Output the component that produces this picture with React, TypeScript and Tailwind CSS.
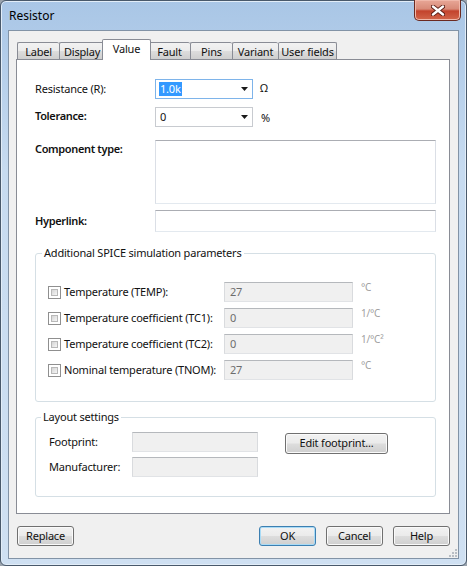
import React from "react";

const tabs = [
  { label: "Label", w: "w-[42px]" },
  { label: "Display", w: "w-[45px]" },
  { label: "Value", w: "w-[45px]", active: true },
  { label: "Fault", w: "w-[41px]" },
  { label: "Pins", w: "w-[42px]" },
  { label: "Variant", w: "w-[46px]" },
  { label: "User fields", w: "w-[59px]" },
];

const spice = [
  { label: "Temperature (TEMP):", value: "27", unit: "°C" },
  { label: "Temperature coefficient (TC1):", value: "0", unit: "1/°C" },
  { label: "Temperature coefficient (TC2):", value: "0", unit: "1/°C²" },
  { label: "Nominal temperature (TNOM):", value: "27", unit: "°C" },
];

function CloseGlyph() {
  return (
    <svg width="14" height="11" viewBox="0 0 14 11">
      <path d="M2 1.5 L12 9.5 M12 1.5 L2 9.5" stroke="#5a1d14" strokeWidth="4.2" strokeLinecap="round" />
      <path d="M2 1.5 L12 9.5 M12 1.5 L2 9.5" stroke="#ffffff" strokeWidth="2.4" strokeLinecap="round" />
    </svg>
  );
}

function DropArrow() {
  return (
    <svg width="7" height="4" viewBox="0 0 7 4">
      <path d="M0 0 H7 L3.5 4 Z" fill="#1a1a1a" />
    </svg>
  );
}

function Combo({ value, focused = false }: { value: string; focused?: boolean }) {
  return (
    <div
      className={
        "flex h-[20px] w-[98px] items-center bg-white pl-[3px] pr-[4px] border " +
        (focused ? "border-[#7eb4ea]" : "border-[#c8cbd0]")
      }
    >
      {focused ? (
        <span className="bg-[#3399ff] px-[1px] leading-[14px] text-white">{value}</span>
      ) : (
        <span className="px-[1px]">{value}</span>
      )}
      <span className="ml-auto">
        <DropArrow />
      </span>
    </div>
  );
}

function TextBox({ className }: { className: string }) {
  return (
    <div
      className={
        "border border-t-[#abadb3] border-x-[#dbdfe6] border-b-[#e3e9ef] bg-white " + className
      }
    />
  );
}

function DisabledBox({ value, className }: { value?: string; className: string }) {
  return (
    <div
      className={
        "flex items-center border border-t-[#b5b8bc] border-x-[#d9dbde] border-b-[#e1e3e6] bg-[#f0f0f0] pl-[5px] text-[#6d6d6d] " +
        className
      }
    >
      {value}
    </div>
  );
}

function Checkbox() {
  return (
    <div className="h-[13px] w-[13px] shrink-0 border border-[#8f8f8f] bg-white p-[2px]">
      <div className="h-full w-full border border-[#b8b8b8] bg-gradient-to-br from-[#d4d4d4] to-[#f6f6f6]" />
    </div>
  );
}

function WinButton({ label, def = false, className = "" }: { label: string; def?: boolean; className?: string }) {
  return (
    <button
      type="button"
      className={
        "flex items-center justify-center rounded-[3px] border bg-[linear-gradient(#f2f2f2_0%,#ebebeb_48%,#dddddd_52%,#cfcfcf_100%)] text-[#111] " +
        (def
          ? "border-[#3c7fb1] shadow-[inset_0_0_0_1px_#a9dbf6] "
          : "border-[#707070] shadow-[inset_0_0_0_1px_#fafafa] ") +
        className
      }
    >
      {label}
    </button>
  );
}

export default function App() {
  return (
    <div className="h-[566px] w-[467px] bg-[#9aa3ad] font-['Noto_Sans',sans-serif] text-[11px] leading-[16px] tracking-[-0.2px] text-[#111]">
      <div className="flex h-full w-full flex-col rounded-[6px] border border-[#49596b] bg-[linear-gradient(180deg,#a9c6e6_0%,#c7dbf0_30%,#cfe0f2_100%)] px-[7px] pb-[6px] shadow-[inset_0_0_0_1px_#e2edf8]">
        {/* title bar */}
        <div className="flex h-[29px] items-start">
          <span className="mt-[7px] pl-[1px] text-[12px] tracking-normal text-black">Resistor</span>
          <div className="ml-auto mr-[-2px] mt-[-1px] flex h-[21px] w-[47px] items-center justify-center rounded-b-[5px] border border-t-0 border-[#6b2a21] bg-[linear-gradient(180deg,#e8a797_0%,#d88a78_45%,#c3432c_55%,#d2664b_100%)] shadow-[inset_0_0_0_1px_#f0b8aa]">
            <CloseGlyph />
          </div>
        </div>

        {/* client */}
        <div className="relative flex flex-1 flex-col border border-[#8293a6] bg-[#f0f0f0] pl-[7px] pr-[8px] pt-[8px]">
          <div className="flex h-[20px] items-end pl-[1px]">
            {tabs.map((t, i) =>
              t.active ? (
                <div
                  key={t.label}
                  className="relative z-10 -mx-[2px] -mb-px flex h-[21px] w-[49px] items-start justify-center rounded-t-[2px] border border-b-0 border-[#898c95] bg-white pt-[1px]"
                >
                  {t.label}
                </div>
              ) : (
                <div
                  key={t.label}
                  className={
                    "flex h-[17px] items-center justify-center rounded-t-[2px] border-l border-t border-[#898c95] bg-[linear-gradient(#f2f2f2_0%,#ebebeb_50%,#dddddd_51%,#cfcfcf_100%)] pt-[1px] " +
                    t.w +
                    (i === tabs.length - 1 ? " border-r" : "") +
                    (tabs[i - 1]?.active ? " border-l-0" : "")
                  }
                >
                  {t.label}
                </div>
              )
            )}
          </div>

          {/* tab panel */}
          <div className="flex h-[455px] flex-col border border-[#898c95] bg-white pl-[18px] pr-[13px] pt-[19px]">
            <div className="flex h-[20px] items-center">
              <span className="w-[120px]">Resistance (R):</span>
              <Combo value="1.0k" focused />
              <span className="ml-[7px] -mt-[3px]">Ω</span>
            </div>
            <div className="mt-[8px] flex h-[20px] items-center">
              <span className="w-[120px] -mt-[3px] font-semibold tracking-[-0.35px]">Tolerance:</span>
              <Combo value="0" />
              <span className="ml-[8px] mt-[1px]">%</span>
            </div>
            <div className="mt-[13px] flex">
              <span className="w-[120px] pt-[1px] font-semibold tracking-[-0.35px]">Component type:</span>
              <TextBox className="h-[64px] flex-1" />
            </div>
            <div className="mt-[6px] flex items-center">
              <span className="w-[120px] font-semibold tracking-[-0.35px]">Hyperlink:</span>
              <TextBox className="h-[22px] flex-1" />
            </div>

            <fieldset className="mt-[13px] rounded-[3px] border border-[#d5dfe5] px-0 pb-[21px]">
              <legend className="ml-[6px] px-[2px]">Additional SPICE simulation parameters</legend>
              <div className="flex flex-col gap-[6px] pl-[12px] pt-[21px]">
                {spice.map((s) => (
                  <div key={s.label} className="flex h-[20px] items-center">
                    <div className="flex w-[176px] items-center gap-[3px]">
                      <Checkbox />
                      <span>{s.label}</span>
                    </div>
                    <DisabledBox value={s.value} className="h-[20px] w-[129px]" />
                    <span className="ml-[8px] self-start -mt-[3px] text-[10px] text-[#a0a0a0]">{s.unit}</span>
                  </div>
                ))}
              </div>
            </fieldset>

            <fieldset className="mt-[7px] rounded-[3px] border border-[#d5dfe5] px-0 pb-[19px]">
              <legend className="ml-[5px] px-[2px]">Layout settings</legend>
              <div className="flex flex-col gap-[5px] pl-[13px] pt-[7px]">
                <div className="flex h-[20px] items-center">
                  <span className="w-[83px]">Footprint:</span>
                  <DisabledBox className="h-[20px] w-[126px]" />
                  <WinButton label="Edit footprint..." className="ml-[27px] mt-[2px] h-[21px] w-[103px]" />
                </div>
                <div className="flex h-[20px] items-center">
                  <span className="w-[83px]">Manufacturer:</span>
                  <DisabledBox className="h-[20px] w-[126px]" />
                </div>
              </div>
            </fieldset>
          </div>

          {/* bottom buttons */}
          <div className="mt-[12px] flex h-[20px] items-center">
            <WinButton label="Replace" className="ml-[1px] h-[20px] w-[57px]" />
            <div className="ml-auto flex gap-[10px]">
              <WinButton label="OK" def className="h-[20px] w-[57px]" />
              <WinButton label="Cancel" className="h-[20px] w-[57px]" />
              <WinButton label="Help" className="h-[20px] w-[57px]" />
            </div>
          </div>

          {/* resize grip */}
          <svg className="absolute bottom-[1px] right-[1px]" width="8" height="8" viewBox="0 0 8 8">
            {[
              [6, 0],
              [6, 3],
              [3, 3],
              [6, 6],
              [3, 6],
              [0, 6],
            ].map(([x, y]) => (
              <rect key={`${x}-${y}`} x={x} y={y} width="2" height="2" fill="#b9bec4" />
            ))}
          </svg>
        </div>
      </div>
    </div>
  );
}
